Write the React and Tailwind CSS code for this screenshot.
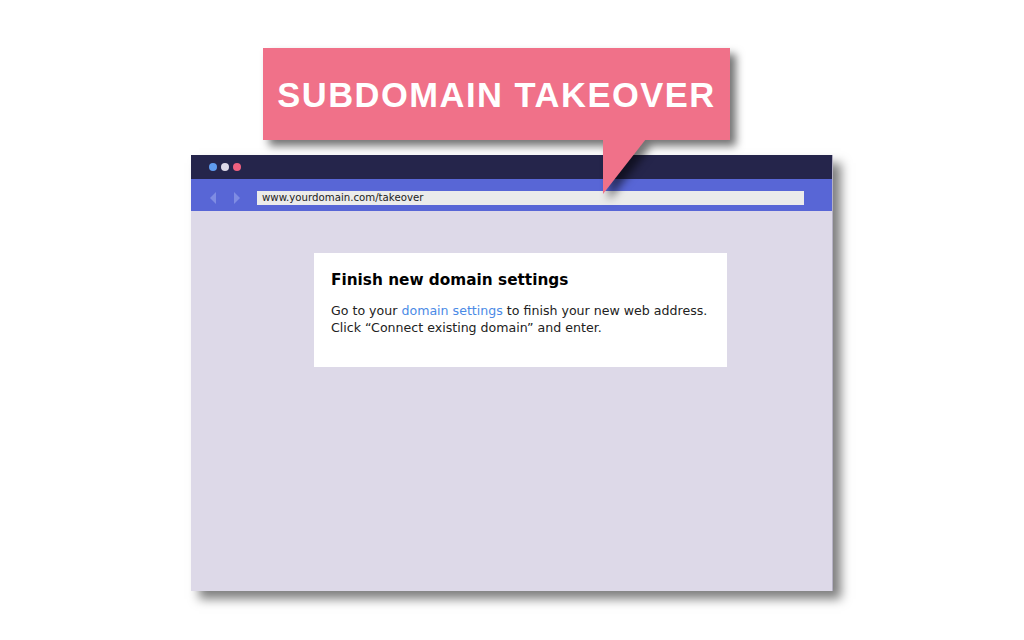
import React from 'react'

const Bubble = () => (
  <div className="ml-[263px] w-[467px] relative drop-shadow-[6px_6px_4px_rgba(0,0,0,0.55)]">
    <div className="h-[92px] bg-[#f07189] flex items-center justify-center">
      <span className="text-white font-bold text-[34.5px] tracking-[1.5px] font-['Liberation_Sans',Arial,sans-serif] leading-none pt-[2px]">
        SUBDOMAIN TAKEOVER
      </span>
    </div>
    {/* speech tail */}
    <svg className="absolute left-[340px] top-[91px]" width="43" height="55" viewBox="0 0 43 55">
      <polygon points="0,0 43,0 0,55" fill="#f07189" />
    </svg>
  </div>
)

const Browser = () => (
  <div className="ml-[191px] mt-[15px] w-[642px] h-[436px] flex flex-col bg-[#ddd9e8] shadow-[8px_8px_10px_rgba(0,0,0,0.5)] border-r border-[#b5b1c4]">
    {/* title bar */}
    <div className="h-[24px] bg-[#25254b] flex items-center gap-[4px] pl-[18px]">
      <span className="w-[8px] h-[8px] rounded-full bg-[#5f9cf0]" />
      <span className="w-[8px] h-[8px] rounded-full bg-[#ddd9e8]" />
      <span className="w-[8px] h-[8px] rounded-full bg-[#f0617f]" />
    </div>
    {/* address bar */}
    <div className="h-[32px] bg-[#5866d6] flex items-end pb-[6px]">
      <div className="w-[66px] h-[14px] flex items-center pl-[19px] gap-[18px]">
        <svg width="6" height="12" viewBox="0 0 6 12">
          <polygon points="6,0 0,6 6,12" fill="#7f8ce3" />
        </svg>
        <svg width="6" height="12" viewBox="0 0 6 12">
          <polygon points="0,0 6,6 0,12" fill="#7f8ce3" />
        </svg>
      </div>
      <div className="w-[547px] h-[14px] bg-[#ebebeb] flex items-center pl-[5px]">
        <span className="text-[10.2px] leading-none text-[#222] font-['DejaVu_Sans',Verdana,sans-serif]">
          www.yourdomain.com/takeover
        </span>
      </div>
    </div>
    {/* page */}
    <div className="flex-1 pt-[42px] pl-[123px]">
      <div className="w-[413px] h-[114px] bg-white pl-[17px] pt-[17px] font-['DejaVu_Sans',Verdana,sans-serif]">
        <h2 className="text-[15.3px] leading-[20px] font-bold text-black">Finish new domain settings</h2>
        <p className="mt-[13px] text-[12.6px] leading-[16.5px] text-[#222]">
          Go to your <span className="text-[#4a8ae6]">domain settings</span> to finish your new web address.
          <br />
          Click “Connect existing domain” and enter.
        </p>
      </div>
    </div>
  </div>
)

export default function App() {
  return (
    <div className="w-[1024px] h-[640px] bg-white pt-[48px] overflow-hidden">
      <Bubble />
      <Browser />
    </div>
  )
}
